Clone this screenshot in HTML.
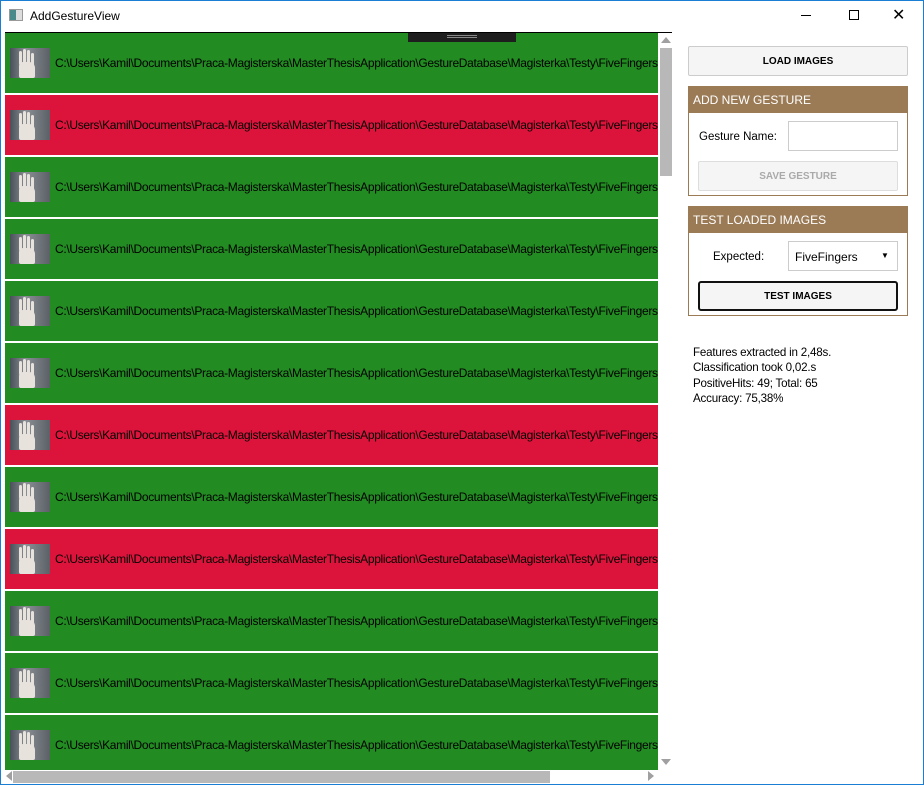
<!DOCTYPE html>
<html><head><style>
*{margin:0;padding:0;box-sizing:border-box}
body{width:924px;height:785px;overflow:hidden;background:#fff;font-family:"Liberation Sans",sans-serif;position:relative}
.win{position:absolute;left:0;top:0;width:924px;height:785px;border:1px solid #1a7fd4}
.t{position:absolute;font-size:12px;color:#000;white-space:nowrap}
.row{position:absolute;left:5px;width:653px;height:60px;overflow:hidden}
.g{background:#228b22}.r{background:#dc143c}
.row .th{position:absolute;left:5px;top:15px;width:40px;height:30px;background:linear-gradient(90deg,#4a5058,#8a8f95 40%,#5a6066)}
.row .th:before{content:"";position:absolute;left:9px;top:3px;width:3px;height:14px;background:#e8e2dc;border-radius:2px;box-shadow:4px -2px 0 #e8e2dc,8px -1px 0 #e8e2dc,12px 2px 0 #e8e2dc}
.row .th:after{content:"";position:absolute;left:9px;top:14px;width:16px;height:16px;background:#e8e2dc;border-radius:4px 6px 2px 2px}
.row span{position:absolute;left:50px;top:23px;font-size:12px;letter-spacing:-0.32px;white-space:nowrap;color:#000}
.btn{position:absolute;border:1px solid #ccc;background:#f5f5f5;border-radius:2px;font-size:10px;font-weight:bold;text-align:center}
.box{position:absolute;left:688px;width:220px;border:1px solid #9b7b56}
.hd{background:#9b7b56;color:#fff;height:26px;font-size:12px;line-height:26px;padding-left:4px}
</style></head><body>
<div class="win"></div>
<div style="position:absolute;left:9px;top:9px;width:14px;height:12px;border:1px solid #999;background:linear-gradient(90deg,#4a8a8a 50%,#ddd 50%)"></div>
<div class="t" style="left:30px;top:9px">AddGestureView</div>
<div style="position:absolute;left:801px;top:15px;width:10px;height:1px;background:#000"></div>
<div style="position:absolute;left:849px;top:10px;width:10px;height:10px;border:1px solid #000"></div>
<div class="t" style="left:892px;top:5px;font-size:16px">✕</div>
<div style="position:absolute;left:5px;top:32px;width:667px;height:1px;background:#000"></div>

<div class="row g" style="top:33px"><div class="th"></div><span>C:\Users\Kamil\Documents\Praca-Magisterska\MasterThesisApplication\GestureDatabase\Magisterka\Testy\FiveFingers</span></div>
<div class="row r" style="top:95px"><div class="th"></div><span>C:\Users\Kamil\Documents\Praca-Magisterska\MasterThesisApplication\GestureDatabase\Magisterka\Testy\FiveFingers</span></div>
<div class="row g" style="top:157px"><div class="th"></div><span>C:\Users\Kamil\Documents\Praca-Magisterska\MasterThesisApplication\GestureDatabase\Magisterka\Testy\FiveFingers</span></div>
<div class="row g" style="top:219px"><div class="th"></div><span>C:\Users\Kamil\Documents\Praca-Magisterska\MasterThesisApplication\GestureDatabase\Magisterka\Testy\FiveFingers</span></div>
<div class="row g" style="top:281px"><div class="th"></div><span>C:\Users\Kamil\Documents\Praca-Magisterska\MasterThesisApplication\GestureDatabase\Magisterka\Testy\FiveFingers</span></div>
<div class="row g" style="top:343px"><div class="th"></div><span>C:\Users\Kamil\Documents\Praca-Magisterska\MasterThesisApplication\GestureDatabase\Magisterka\Testy\FiveFingers</span></div>
<div class="row r" style="top:405px"><div class="th"></div><span>C:\Users\Kamil\Documents\Praca-Magisterska\MasterThesisApplication\GestureDatabase\Magisterka\Testy\FiveFingers</span></div>
<div class="row g" style="top:467px"><div class="th"></div><span>C:\Users\Kamil\Documents\Praca-Magisterska\MasterThesisApplication\GestureDatabase\Magisterka\Testy\FiveFingers</span></div>
<div class="row r" style="top:529px"><div class="th"></div><span>C:\Users\Kamil\Documents\Praca-Magisterska\MasterThesisApplication\GestureDatabase\Magisterka\Testy\FiveFingers</span></div>
<div class="row g" style="top:591px"><div class="th"></div><span>C:\Users\Kamil\Documents\Praca-Magisterska\MasterThesisApplication\GestureDatabase\Magisterka\Testy\FiveFingers</span></div>
<div class="row g" style="top:653px"><div class="th"></div><span>C:\Users\Kamil\Documents\Praca-Magisterska\MasterThesisApplication\GestureDatabase\Magisterka\Testy\FiveFingers</span></div>
<div class="row g" style="top:715px;height:55px"><div class="th"></div><span>C:\Users\Kamil\Documents\Praca-Magisterska\MasterThesisApplication\GestureDatabase\Magisterka\Testy\FiveFingers</span></div>

<div style="position:absolute;left:408px;top:33px;width:108px;height:9px;background:#1e1e1e"></div>
<div style="position:absolute;left:447px;top:35px;width:30px;height:3px;border-top:1px solid #888;border-bottom:1px solid #888"></div>

<div style="position:absolute;left:661px;top:37px;width:0;height:0;border-left:5px solid transparent;border-right:5px solid transparent;border-bottom:6px solid #a0a0a0"></div>
<div style="position:absolute;left:660px;top:48px;width:12px;height:128px;background:#b8b8b8"></div>
<div style="position:absolute;left:661px;top:759px;width:0;height:0;border-left:5px solid transparent;border-right:5px solid transparent;border-top:6px solid #a0a0a0"></div>
<div style="position:absolute;left:6px;top:771px;width:0;height:0;border-top:5px solid transparent;border-bottom:5px solid transparent;border-right:6px solid #a0a0a0"></div>
<div style="position:absolute;left:13px;top:771px;width:537px;height:12px;background:#b8b8b8"></div>
<div style="position:absolute;left:648px;top:771px;width:0;height:0;border-top:5px solid transparent;border-bottom:5px solid transparent;border-left:6px solid #a0a0a0"></div>

<div class="btn" style="left:688px;top:46px;width:220px;height:30px;line-height:30px">LOAD IMAGES</div>

<div class="box" style="top:86px;height:110px">
<div class="hd">ADD NEW GESTURE</div>
<div class="t" style="left:10px;top:44px;font-size:11.5px">Gesture Name:</div>
<div style="position:absolute;left:99px;top:34px;width:110px;height:30px;border:1px solid #ccc;background:#fff"></div>
<div class="btn" style="left:9px;top:74px;width:200px;height:30px;line-height:30px;color:#aaa;border-color:#ddd">SAVE GESTURE</div>
</div>

<div class="box" style="top:206px;height:110px">
<div class="hd">TEST LOADED IMAGES</div>
<div class="t" style="left:24px;top:44px;font-size:11.5px">Expected:</div>
<div style="position:absolute;left:99px;top:34px;width:110px;height:30px;border:1px solid #ccc;background:#fff"><span class="t" style="left:6px;top:8px">FiveFingers</span><span class="t" style="left:92px;top:9px;font-size:8px">▼</span></div>
<div class="btn" style="left:9px;top:74px;width:200px;height:30px;line-height:27px;color:#000;border:2px solid #111;border-radius:3px">TEST IMAGES</div>
</div>

<div class="t" style="left:693px;top:345px;line-height:15.3px;font-size:11.6px;letter-spacing:-0.2px">Features extracted in 2,48s.<br>Classification took 0,02.s<br>PositiveHits: 49; Total: 65<br>Accuracy: 75,38%</div>
</body></html>
